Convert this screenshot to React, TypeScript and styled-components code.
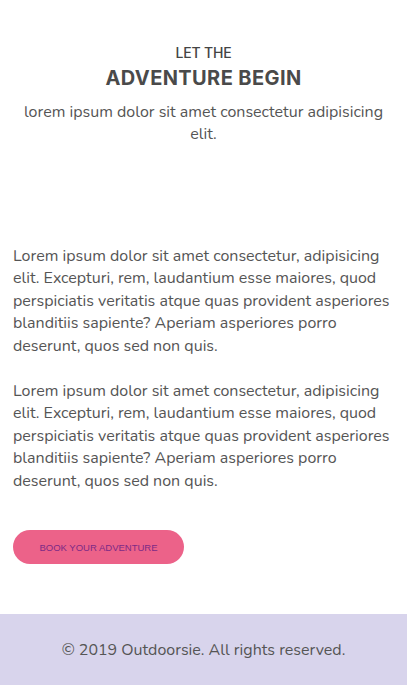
import styled, { createGlobalStyle } from 'styled-components';

const GlobalStyle = createGlobalStyle`
  html, body {
    margin: 0;
    padding: 0;
    background: #fff;
  }
  body {
    font-family: 'Nunito', 'Lato', 'Open Sans', sans-serif;
    color: #555;
  }
  * {
    box-sizing: border-box;
  }
`;

const Page = styled.div`
  display: flex;
  flex-direction: column;
  min-height: 685px;
`;

const Hero = styled.header`
  display: flex;
  flex-direction: column;
  align-items: center;
  text-align: center;
  padding: 44px 20px 0;
  height: 230px;
`;

const Kicker = styled.h3`
  margin: 0;
  font-family: 'Inter', 'Liberation Sans', sans-serif;
  font-size: 14px;
  font-weight: 500;
  letter-spacing: -0.2px;
  color: #444;
  line-height: 18px;
`;

const Title = styled.h1`
  margin: 3px 0 0;
  font-family: 'Inter', 'Liberation Sans', sans-serif;
  font-size: 20px;
  font-weight: 700;
  letter-spacing: 0.4px;
  color: #4a4a4a;
  line-height: 26px;
`;

const Tagline = styled.p`
  margin: 10px 0 0;
  font-size: 16px;
  line-height: 22px;
  color: #555;
`;

const Content = styled.main`
  padding: 15px 13px 0;
  flex: 1;
`;

const Paragraph = styled.p`
  margin: 0 0 23px;
  font-size: 16px;
  line-height: 22.4px;
  color: #555;
`;

const BookButton = styled.button`
  margin-top: 15px;
  width: 171px;
  height: 34px;
  border: none;
  border-radius: 17px;
  background: #ec6289;
  color: #7d2a86;
  font-family: 'Liberation Sans', Arial, sans-serif;
  font-size: 9.5px;
  text-transform: uppercase;
  cursor: pointer;
`;

const Footer = styled.footer`
  margin-top: 50px;
  height: 71px;
  background: #d8d4ec;
  display: flex;
  align-items: center;
  justify-content: center;
  font-size: 16px;
  color: #555;
`;

export default function App() {
  return (
    <>
      <GlobalStyle />
      <Page>
        <Hero>
          <Kicker>LET THE</Kicker>
          <Title>ADVENTURE BEGIN</Title>
          <Tagline>lorem ipsum dolor sit amet consectetur adipisicing elit.</Tagline>
        </Hero>
        <Content>
          <Paragraph>
            Lorem ipsum dolor sit amet consectetur, adipisicing elit. Excepturi, rem, laudantium esse
            maiores, quod perspiciatis veritatis atque quas provident asperiores blanditiis sapiente?
            Aperiam asperiores porro deserunt, quos sed non quis.
          </Paragraph>
          <Paragraph>
            Lorem ipsum dolor sit amet consectetur, adipisicing elit. Excepturi, rem, laudantium esse
            maiores, quod perspiciatis veritatis atque quas provident asperiores blanditiis sapiente?
            Aperiam asperiores porro deserunt, quos sed non quis.
          </Paragraph>
          <BookButton>Book your adventure</BookButton>
        </Content>
        <Footer>© 2019 Outdoorsie. All rights reserved.</Footer>
      </Page>
    </>
  );
}
